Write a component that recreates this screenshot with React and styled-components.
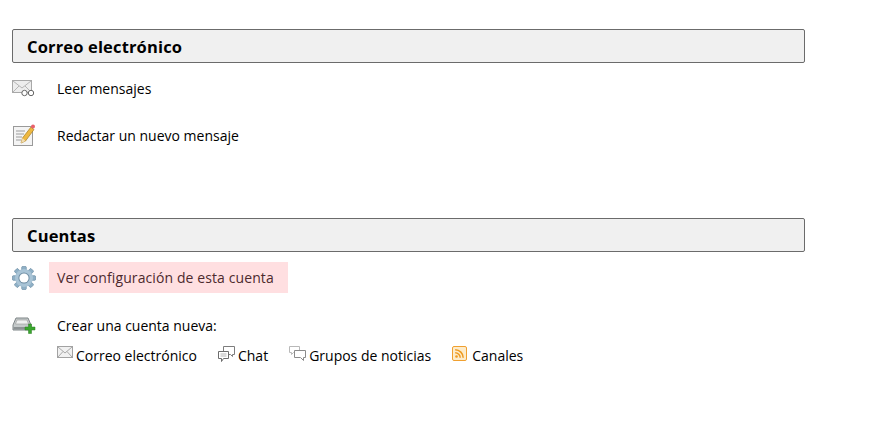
import React from 'react';
import styled, { createGlobalStyle } from 'styled-components';

const GlobalStyle = createGlobalStyle`
  html, body { margin: 0; padding: 0; background: #fff; }
  body { font-family: "Open Sans", "Noto Sans", sans-serif; color: #000; }
`;

const MailReadIcon = () => (
  <svg width="24" height="18" viewBox="0 0 24 18">
    <rect x="0.5" y="1.5" width="19" height="12" fill="#ededed" stroke="#a8a8a8" />
    <path d="M1 2l9 7 9-7M1 13l6-6M19 13l-6-6" fill="none" stroke="#b5b5b5" />
    <circle cx="12.5" cy="14" r="2.7" fill="#fff" stroke="#666" />
    <circle cx="19" cy="14" r="2.7" fill="#fff" stroke="#666" />
  </svg>
);

const ComposeIcon = () => (
  <svg width="24" height="24" viewBox="0 0 24 24">
    <rect x="1.5" y="3.5" width="19" height="19" fill="#f4f4f4" stroke="#9a9a9a" />
    <path d="M4 8h9M4 11h8M4 14h6M4 17h5" stroke="#9c9c9c" />
    <path d="M9 20l1.5-5L19 4l3 2.5L13.5 18z" fill="#eeb840" stroke="#a87c20" strokeWidth="0.7" />
    <path d="M9 20l1.5-5 3 3z" fill="#f1dcb0" />
    <circle cx="21" cy="3.5" r="2" fill="#e8606c" />
  </svg>
);

const GearIcon = () => (
  <svg width="24" height="24" viewBox="0 0 24 24">
    <g fill="#8fb0c6" stroke="#7a98ad" strokeWidth="0.5">
      {[0, 45, 90, 135, 180, 225, 270, 315].map(a => (
        <rect key={a} x="9.8" y="0.4" width="4.4" height="23.2" rx="1" transform={`rotate(${a} 12 12)`} />
      ))}
    </g>
    <circle cx="12" cy="12" r="9" fill="#a9c4d6" />
    <circle cx="12" cy="12" r="5.6" fill="#6f8ea4" />
    <circle cx="12" cy="12" r="4.6" fill="#fff" />
  </svg>
);

const NewAccountIcon = () => (
  <svg width="24" height="18" viewBox="0 0 24 18">
    <path d="M4 2h12l3 7v5H1V9z" fill="#c5cacb" stroke="#7f8587" />
    <path d="M5 4h10l1.5 4h-13z" fill="#eef0f0" stroke="#999" strokeWidth="0.6" />
    <path d="M1.5 11h17v2.5h-17z" fill="#8c9294" />
    <path d="M16.5 8h3v3H23v3h-3.5v3.5h-3V14H13v-3h3.5z" fill="#3aa62e" stroke="#2a7d22" strokeWidth="0.5" />
  </svg>
);

const SmallMailIcon = () => (
  <svg width="16" height="12" viewBox="0 0 16 12">
    <rect x="0.5" y="0.5" width="15" height="11" fill="#f1f1f1" stroke="#a2a2a2" />
    <path d="M1 1l7 6 7-6M1 11l5-5.5M15 11l-5-5.5" fill="none" stroke="#a8a8a8" />
  </svg>
);

const ChatIcon = () => (
  <svg width="17" height="17" viewBox="0 0 17 17">
    <path d="M5.5.5h11v8h-2v2l-2-2h-7z" fill="#fff" stroke="#7d7d7d" />
    <path d="M.5 5.5h10v7h-5l-2 3v-3h-3z" fill="#fff" stroke="#6d6d6d" />
    <path d="M2.5 8h6M2.5 10h6" stroke="#b5b5b5" />
  </svg>
);

const NewsIcon = () => (
  <svg width="17" height="16" viewBox="0 0 17 16">
    <path d="M.5.5h10v6h-6l-2 2v-2h-2z" fill="#fff" stroke="#b8b8b8" />
    <path d="M5.5 4.5h11v7h-2v3l-3-3h-6z" fill="#fff" stroke="#8b8b8b" />
  </svg>
);

const FeedIcon = () => (
  <svg width="15" height="15" viewBox="0 0 15 15">
    <rect x="0.5" y="0.5" width="14" height="14" rx="1.5" fill="#fdeccb" stroke="#f0a030" />
    <circle cx="4.5" cy="10.5" r="1.3" fill="#ee9a20" />
    <path d="M3.2 6.8a5 5 0 0 1 5 5M3.2 3.8a8 8 0 0 1 8 8" fill="none" stroke="#ee9a20" strokeWidth="1.5" />
  </svg>
);

const Page = styled.div`
  width: 880px;
  height: 441px;
  padding: 29px 0 0 12px;
  box-sizing: border-box;
  overflow: hidden;
`;

const Section = styled.section`
  width: 793px;
  margin-bottom: ${p => p.$gap}px;
`;

const Heading = styled.h2`
  margin: 0;
  height: 34px;
  box-sizing: border-box;
  padding-left: 14px;
  display: flex;
  align-items: center;
  background: #f0f0f0;
  border: 1px solid #6b6b6b;
  border-radius: 2px;
  font-size: 16.5px;
  font-weight: 700;
  letter-spacing: 0.15px;
  color: #000;
`;

const Row = styled.div`
  display: flex;
  align-items: center;
  height: ${p => p.$height}px;
  margin-top: ${p => p.$top}px;
`;

const IconSlot = styled.span`
  width: 37px;
  flex: none;
  display: flex;
  align-items: center;
`;

const Label = styled.span`
  padding-left: 8px;
  font-size: 14px;
  color: #000;
  line-height: 31px;
`;

const Highlight = styled(Label)`
  width: 239px;
  box-sizing: border-box;
  background: #ffdfe1;
  color: #4d2a2e;
  letter-spacing: 0.1px;
`;

const LinkRow = styled.div`
  display: flex;
  align-items: center;
  gap: 21px;
  margin: 7px 0 0 45px;
`;

const LinkItem = styled.span`
  display: flex;
  align-items: flex-start;
  gap: ${p => p.$gap}px;
  font-size: 14px;
  line-height: 24px;

  svg {
    flex: none;
    margin-top: 2px;
  }
`;

export default function App() {
  return (
    <Page>
      <GlobalStyle />
      <Section $gap={71}>
        <Heading>Correo electrónico</Heading>
        <Row $height={24} $top={13}>
          <IconSlot><MailReadIcon /></IconSlot>
          <Label>Leer mensajes</Label>
        </Row>
        <Row $height={24} $top={23}>
          <IconSlot><ComposeIcon /></IconSlot>
          <Label>Redactar un nuevo mensaje</Label>
        </Row>
      </Section>
      <Section $gap={0}>
        <Heading>Cuentas</Heading>
        <Row $height={31} $top={10}>
          <IconSlot><GearIcon /></IconSlot>
          <Highlight>Ver configuración de esta cuenta</Highlight>
        </Row>
        <Row $height={24} $top={20}>
          <IconSlot><NewAccountIcon /></IconSlot>
          <Label>Crear una cuenta nueva:</Label>
        </Row>
        <LinkRow>
          <LinkItem $gap={3}><SmallMailIcon />Correo electrónico</LinkItem>
          <LinkItem $gap={3}><ChatIcon />Chat</LinkItem>
          <LinkItem $gap={3}><NewsIcon />Grupos de noticias</LinkItem>
          <LinkItem $gap={5}><FeedIcon />Canales</LinkItem>
        </LinkRow>
      </Section>
    </Page>
  );
}
